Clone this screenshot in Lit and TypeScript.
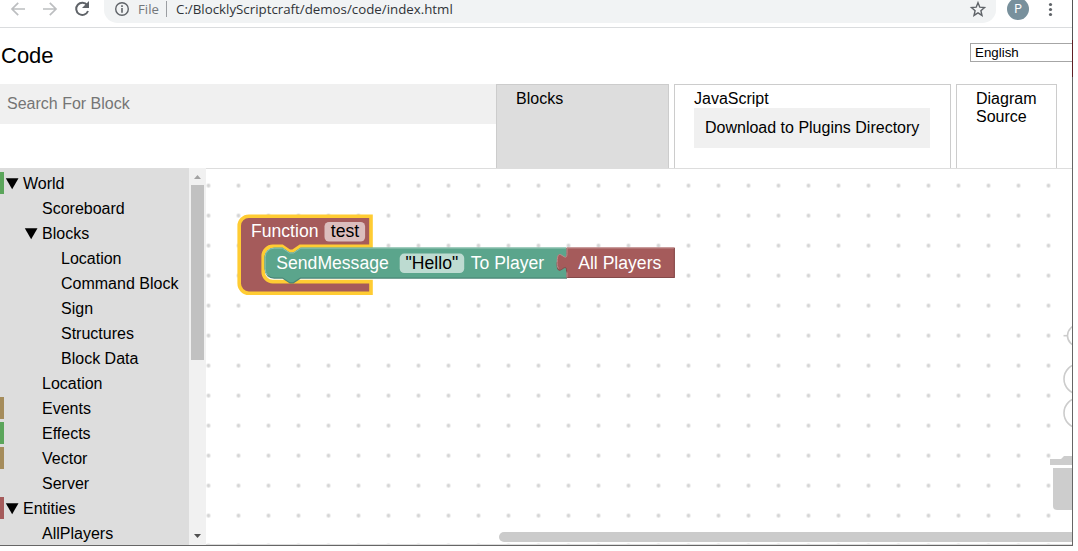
import { LitElement, html, css, svg } from "lit";
import { customElement, property } from "lit/decorators.js";
import { classMap } from "lit/directives/class-map.js";

type Category = { name: string; level: number; colour?: string; open?: boolean };

const CATEGORIES: Category[] = [
  { name: "World", level: 0, colour: "green", open: true },
  { name: "Scoreboard", level: 1 },
  { name: "Blocks", level: 1, open: true },
  { name: "Location", level: 2 },
  { name: "Command Block", level: 2 },
  { name: "Sign", level: 2 },
  { name: "Structures", level: 2 },
  { name: "Block Data", level: 2 },
  { name: "Location", level: 1 },
  { name: "Events", level: 1, colour: "brown" },
  { name: "Effects", level: 1, colour: "green" },
  { name: "Vector", level: 1, colour: "brown" },
  { name: "Server", level: 1 },
  { name: "Entities", level: 0, colour: "red", open: true },
  { name: "AllPlayers", level: 1 },
];

@customElement("browser-bar")
class BrowserBar extends LitElement {
  static styles = css`
    :host { display: flex; box-sizing: border-box; height: 28px; border-bottom: 1px solid #dadcde; background: #fff; align-items: flex-start; overflow: hidden; }
    svg { display: block; flex: none; }
    .nav { width: 104px; height: 27px; }
    .address { display: flex; box-sizing: border-box; width: 892px; height: 23px; border-radius: 0 0 14px 14px / 0 0 13px 13px; background: #f1f3f4; padding-left: 9px; font: 13.3px/18px "Open Sans", "Noto Sans", sans-serif; color: #303338; }
    .file { margin-left: 8px; width: 24px; color: #73777b; font-size: 13.2px; }
    .rule { width: 1px; height: 16px; background: #9b9ea2; margin: 1px 9px 0 4px; }
    .url { flex: 1; white-space: nowrap; }
    .star { margin-right: 9px; }
    .tools { width: 76px; height: 27px; }
  `;
  render() {
    return html`
      <svg class="nav" viewBox="0 0 104 27" fill="none">
        <g stroke="#bcbec0" stroke-width="1.7">
          <path d="M25 9H12M18.2 2.8 12 9l6.2 6.2" />
          <path d="M43 9h13M49.8 2.8 56 9l-6.2 6.2" />
        </g>
        <path d="M87.2 5.200A6.100 6.100 0 1 0 88 11" stroke="#5f6368" stroke-width="2" />
        <path d="M89 1v7h-7z" fill="#5f6368" />
      </svg>
      <div class="address">
        <svg width="17" height="18" viewBox="0 0 17 18">
          <circle cx="9" cy="9" r="6.3" fill="none" stroke="#5f6368" stroke-width="1.4" />
          <path d="M8.200 5.300h1.600v1.600H8.200zM8.200 8.100h1.600v4.700H8.200z" fill="#5f6368" />
        </svg>
        <span class="file">File</span><span class="rule"></span>
        <span class="url">C:/BlocklyScriptcraft/demos/code/index.html</span>
        <svg class="star" width="18" height="18" viewBox="0 0 18 18">
          <path d="m9 2.700 1.800 4.500 4.700.4-3.600 3.100 1.100 4.700L9 12.900l-4 2.500 1.100-4.700-3.600-3.100 4.700-.4z" fill="none" stroke="#5f6368" stroke-width="1.4" />
        </svg>
      </div>
      <svg class="tools" viewBox="996 0 76 27">
        <circle cx="1018" cy="9" r="11" fill="#78909c" />
        <text x="1018" y="13.2" text-anchor="middle" font-family="Roboto, sans-serif" font-size="12" fill="#fff">P</text>
        <g fill="#5f6368"><circle cx="1050.5" cy="4.5" r="1.6" /><circle cx="1050.5" cy="9.5" r="1.6" /><circle cx="1050.5" cy="14.5" r="1.6" /></g>
      </svg>`;
  }
}

@customElement("category-tree")
class CategoryTree extends LitElement {
  @property({ attribute: false }) items: Category[] = CATEGORIES;
  static styles = css`
    :host { display: flex; width: 206px; height: 377px; flex: none; font: 16px/22px "Liberation Sans", Arial, sans-serif; color: #000; }
    .tree { width: 189px; padding-top: 4px; box-sizing: border-box; background: #ddd; overflow: hidden; }
    .row { display: flex; align-items: flex-start; box-sizing: border-box; height: 22px; margin-bottom: 3px; border-left: 4px solid transparent; white-space: nowrap; }
    .name { line-height: 24px; }
    .l1 { padding-left: 19px; }
    .l2 { padding-left: 38px; }
    .green { border-color: #5ba55b; }
    .brown { border-color: #a58c5b; }
    .red { border-color: #a55b5b; }
    .arrow { width: 19px; height: 22px; flex: none; }
    .track { width: 17px; background: #f1f1f1; display: flex; flex-direction: column; align-items: center; }
    .thumb { width: 13px; height: 175px; background: #c1c1c1; }
    .space { flex: 1; }
    svg { display: block; }
  `;
  render() {
    return html`
      <div class="tree">
        ${this.items.map((c) => html`
          <div class=${classMap({ row: true, l1: c.level === 1, l2: c.level === 2, green: c.colour === "green", brown: c.colour === "brown", red: c.colour === "red" })}>
            <svg class="arrow" viewBox="0 0 19 22">${c.open ? svg`<path d="M1.800 6.200h12.700L8.150 17.200z" />` : null}</svg>
            <span class="name">${c.name}</span>
          </div>`)}
      </div>
      <div class="track">
        <svg width="17" height="17" viewBox="0 0 17 17"><path d="m5 11 3.500-4 3.500 4z" fill="#a3a3a3" /></svg>
        <div class="thumb"></div>
        <div class="space"></div>
        <svg width="17" height="17" viewBox="0 0 17 17"><path d="m5 6 3.500 4L12 6z" fill="#505050" /></svg>
      </div>`;
  }
}

@customElement("block-canvas")
class BlockCanvas extends LitElement {
  static styles = css`
    :host { display: block; flex: 1; min-width: 0; height: 377px; }
    svg { display: block; width: 866px; height: 377px; }
    .label { font: 17.6px "Liberation Sans", Arial, sans-serif; fill: #fff; }
    .value { fill: #000; }
  `;
  render() {
    return html`
      <svg viewBox="206 168 866 377">
        <defs>
          <pattern id="grid" x="193.5" y="170.6" width="30" height="30" patternUnits="userSpaceOnUse">
            <circle cx="15" cy="15" r="1.9" fill="#d4d4d4" />
          </pattern>
        </defs>
        <rect x="206" y="168" width="866" height="377" fill="#fff" />
        <rect x="206" y="168" width="866" height="377" fill="url(#grid)" />
        <path d="M206 168.500H1072M206 544.500H1072" stroke="#ddd" />

        <path d="M239.200 225.800a9.600 9.600 0 0 1 9.600-9.600H371V246.400H300.200l-7.200 4.800h-3.600l-7.200-4.800h-9.400a9.600 9.600 0 0 0-9.600 9.600v16a9.600 9.600 0 0 0 9.600 9.600H371V293.200H248.800a9.600 9.600 0 0 1-9.600-9.600z" fill="#a55b5b" stroke="#fc3" stroke-width="3.6" />
        <path d="M264.600 257.200a9.600 9.600 0 0 1 9.600-9.600h8.400l7.200 4.800h3.600l7.200-4.800H567v30.800H300.600l-7.200 4.800h-3.600l-7.200-4.800h-8.400a9.600 9.600 0 0 1-9.600-9.600z" fill="#498475" transform="translate(0 .3)" />
        <path d="M264.600 257.200a9.600 9.600 0 0 1 9.600-9.600h8.400l7.200 4.800h3.600l7.200-4.800H566.300v29.900H300.300l-7.200 4.800h-3.300l-7.200-4.800h-8.400a9.600 9.600 0 0 1-9.600-9.600z" fill="#5ba58c" />
        <path d="M267.800 275.500a9 9 0 0 1-2.600-6.700v-11.600a9 9 0 0 1 9-9h8.200l7.200 4.800h4l7.200-4.800H566" fill="none" stroke="#8cc0af" />
        <path d="M566.600 247.400H674.800V278H566.600V271.400C566.600 259.400 557 281 557 262.400C557 243.800 566.600 265.400 566.600 253.400z" fill="#a55b5b" />
        <path d="M674.300 248v29.500H567M566.600 271.400C566.600 259.400 557 281 557 262.400" fill="none" stroke="#844949" />
        <path d="M567 277.500v-5M558.500 268.500C557.200 266.500 557.200 264.500 557.200 262.400C557.200 243.800 567 265.400 567 253.400V248H674" fill="none" stroke="#c08c8c" />

        <rect x="324.5" y="222" width="40.6" height="19.5" rx="4.5" fill="#fff" fill-opacity=".6" />
        <rect x="399.7" y="253.6" width="64.5" height="19.5" rx="4.5" fill="#fff" fill-opacity=".6" />
        <text class="label" x="251" y="237">Function</text>
        <text class="label value" x="330.8" y="237">test</text>
        <text class="label" x="276.3" y="269">SendMessage</text>
        <text class="label value" x="405.6" y="269">"Hello"</text>
        <text class="label" x="470.8" y="269">To Player</text>
        <text class="label" x="578.2" y="269">All Players</text>

        <g fill="none" stroke="#ccc" stroke-width="1.6">
          <circle cx="1078" cy="335.7" r="10.5" />
          <path d="M1063.500 335.700h4" />
          <circle cx="1079" cy="379" r="15" />
          <circle cx="1079" cy="413" r="15" />
        </g>
        <path d="M1050 459h11l3-3h8v9h-22zM1053 468h19v42h-15a4 4 0 0 1-4-4z" fill="#cdcdcd" />
        <path d="M1072 532H504a5 5 0 0 0 0 10h568z" fill="#cbcbcb" />
      </svg>`;
  }
}

@customElement("app-root")
class AppRoot extends LitElement {
  static styles = css`
    :host { display: flex; width: 1078px; height: 551px; overflow: hidden; background: #fff; font: 16px/18px "Liberation Sans", Arial, sans-serif; color: #000; }
    .window { box-sizing: border-box; width: 1072px; height: 546px; border-bottom: 1px solid #666; overflow: hidden; }
    .edge { width: 1px; height: 546px; background: linear-gradient(#555 40px, #5e1f24 40px, #5e1f24 77px, #666 77px); }
    .heading { display: flex; justify-content: space-between; align-items: flex-start; height: 56px; }
    h1 { margin: 15px 0 0 1px; font-size: 22px; line-height: 26px; font-weight: 400; }
    .language { box-sizing: border-box; width: 102px; height: 19px; margin-top: 15px; border: 1px solid #a6a6a6; border-right: 0; padding-left: 4px; font-size: 13.333px; line-height: 17px; }
    .tabs { display: flex; height: 84px; }
    .search { box-sizing: border-box; width: 496px; height: 40px; background: #f0f0f0; padding: 11px 7px; color: #757575; }
    .tab { box-sizing: border-box; height: 84px; border: 1px solid #ccc; border-bottom: 0; padding: 5px 19px; }
    .blocks { width: 173px; background: #ddd; margin-right: 5px; }
    .script { width: 277px; margin-right: 5px; }
    .diagram { width: 101px; }
    .download { box-sizing: border-box; width: 236px; height: 40px; background: #f0f0f0; padding: 11px; white-space: nowrap; }
    .main { display: flex; }
  `;
  render() {
    return html`
      <div class="window">
        <browser-bar></browser-bar>
        <div class="heading"><h1>Code</h1><div class="language">English</div></div>
        <div class="tabs">
          <div class="search">Search For Block</div>
          <div class="tab blocks">Blocks</div>
          <div class="tab script">JavaScript<div class="download">Download to Plugins Directory</div></div>
          <div class="tab diagram">Diagram Source</div>
        </div>
        <div class="main"><category-tree></category-tree><block-canvas></block-canvas></div>
      </div>
      <div class="edge"></div>`;
  }
}
